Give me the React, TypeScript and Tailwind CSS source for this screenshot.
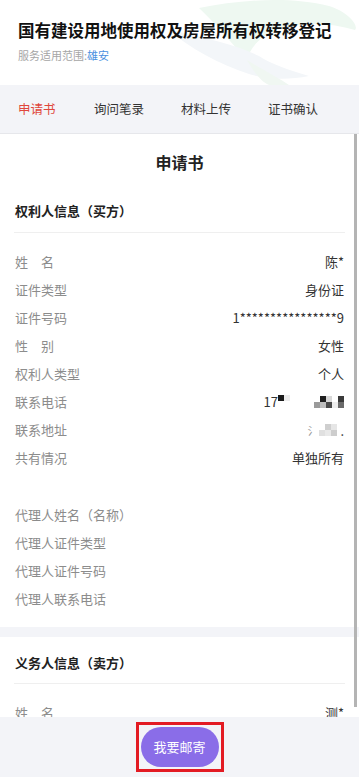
import React from 'react';

const font = { fontFamily: '"Noto Sans CJK SC", "Noto Sans", sans-serif' };

const buyerRows: { label: string; value: React.ReactNode }[] = [
  { label: '姓\u3000名', value: '陈*' },
  { label: '证件类型', value: '身份证' },
  { label: '证件号码', value: '1****************9' },
  { label: '性\u3000别', value: '女性' },
  { label: '权利人类型', value: '个人' },
  { label: '联系电话', value: 'phone' },
  { label: '联系地址', value: 'addr' },
  { label: '共有情况', value: '单独所有' },
];

const agentRows = ['代理人姓名（名称）', '代理人证件类型', '代理人证件号码', '代理人联系电话'];

const tabs = ['申请书', '询问笔录', '材料上传', '证书确认'];

// mosaic blocks standing in for the blurred phone / address
const Mosaic: React.FC<{ cells: string[][] }> = ({ cells }) => (
  <span className="inline-flex flex-col align-middle">
    {cells.map((row, i) => (
      <span key={i} className="flex">
        {row.map((c, j) => (
          <span key={j} className="block w-[6px] h-[6px]" style={{ background: c }} />
        ))}
      </span>
    ))}
  </span>
);

const Phone = () => (
  <span className="inline-flex items-center">
    <span>17</span>
    <span className="flex self-start mt-[3px]">
      <span className="block w-[6px] h-[6px] bg-[#1a1a1a]" />
      <span className="block w-[6px] h-[6px] bg-[#ececec]" />
    </span>
    <span className="w-[24px]" />
    <Mosaic
      cells={[
        ['#ffffff', '#1f1f1f', '#d8d8d8', '#ffffff', '#3a3a3a'],
        ['#9a9a9a', '#bdbdbd', '#4a4a4a', '#ededed', '#6a6a6a'],
      ]}
    />
  </span>
);

const Addr = () => (
  <span className="inline-flex items-center">
    <span className="text-[#999] text-[11px] mr-[1px]">氵</span>
    <Mosaic
      cells={[
        ['#ffffff', '#cfcfcf', '#e6e6e6', '#ffffff'],
        ['#e0e0e0', '#e9e9e9', '#cdcdcd', '#ffffff'],
      ]}
    />
    <span className="text-[#333] -ml-[3px]">.</span>
  </span>
);

const SectionTitle: React.FC<{ text: string; className?: string }> = ({ text, className }) => (
  <div className={`mx-[14px] border-b border-[#efefef] flex items-center ${className ?? ''}`}>
    <span className="pl-[1px] text-[13px] font-bold text-[#222]">{text}</span>
  </div>
);

const HeaderArt = () => (
  <svg className="absolute right-0 top-0" width="200" height="85" viewBox="0 0 200 85">
    <path d="M40 8 C80 0 130 -4 170 6 C190 12 200 26 196 30 C170 22 140 22 118 30 C100 36 90 50 88 60 C70 40 55 22 40 8 Z" fill="#eef8f1" />
    <path d="M10 30 C30 48 60 64 90 74 C110 80 130 80 150 76 C130 70 112 64 100 56 C80 46 50 38 10 30 Z" fill="#f3f6f9" />
    <path d="M88 60 C95 72 102 82 110 85 L130 85 C120 78 104 70 88 60 Z" fill="#f0f7f2" />
  </svg>
);

export default function App() {
  return (
    <div className="w-[359px] h-[777px] flex flex-col bg-white overflow-hidden" style={font}>
      {/* header */}
      <div className="relative h-[85px] shrink-0 bg-white overflow-hidden">
        <HeaderArt />
        <div className="relative pl-[18px] pt-[19px]">
          <div className="text-[16.5px] leading-[22px] font-bold text-[#111] whitespace-nowrap">
            国有建设用地使用权及房屋所有权转移登记
          </div>
          <div className="mt-[6px] text-[11px] leading-[16px] text-[#a6a6a6]">
            服务适用范围:<span className="text-[#4a8fe0]">雄安</span>
          </div>
        </div>
      </div>

      {/* tabs */}
      <div className="h-[49px] shrink-0 bg-[#f3f4f8] border-b border-[#e6e7eb] flex items-center pl-[18px] text-[12.5px] text-[#333]">
        {tabs.map((t, i) => (
          <span
            key={t}
            className={
              i === 0
                ? 'text-[#e0473c] w-[76px]'
                : i === 1
                ? 'w-[87px]'
                : i === 2
                ? 'w-[87px]'
                : ''
            }
          >
            {t}
          </span>
        ))}
      </div>

      {/* scroll area */}
      <div className="relative flex-1 overflow-hidden">
        <div className="h-[56px] flex items-center justify-center text-[16px] font-bold text-[#222]">申请书</div>
        <SectionTitle text="权利人信息（买方）" className="h-[43px]" />
        <div className="px-[15px] pt-[15px] text-[13px]">
          {buyerRows.map((r) => (
            <div key={r.label} className="h-[28px] flex items-center justify-between">
              <span className="text-[#8c8c8c]">{r.label}</span>
              <span className="text-[#333]">
                {r.value === 'phone' ? <Phone /> : r.value === 'addr' ? <Addr /> : r.value}
              </span>
            </div>
          ))}
          <div className="h-[29px]" />
          {agentRows.map((l) => (
            <div key={l} className="h-[28px] flex items-center">
              <span className="text-[#8c8c8c]">{l}</span>
            </div>
          ))}
          <div className="h-[14px]" />
        </div>
        <div className="h-[10px] bg-[#f3f4f8]" />
        <SectionTitle text="义务人信息（卖方）" className="h-[47px] pt-[5px]" />
        <div className="px-[15px] pt-[15px] text-[13px]">
          <div className="h-[28px] flex items-center justify-between">
            <span className="text-[#8c8c8c]">姓{'\u3000'}名</span>
            <span className="text-[#333]">测*</span>
          </div>
        </div>
        {/* scrollbar */}
        <div className="absolute right-[2px] top-[-6px] bottom-[10px] w-[3px] bg-[#b4b4b4]" />
      </div>

      {/* footer */}
      <div className="h-[60px] shrink-0 bg-[#f3f4f8] flex items-center justify-center">
        <div className="border-[3px] border-[#e31b23] p-[2px]">
          <button className="w-[78px] h-[40px] rounded-full bg-[#8a6de8] text-white text-[13px]">我要邮寄</button>
        </div>
      </div>
    </div>
  );
}
